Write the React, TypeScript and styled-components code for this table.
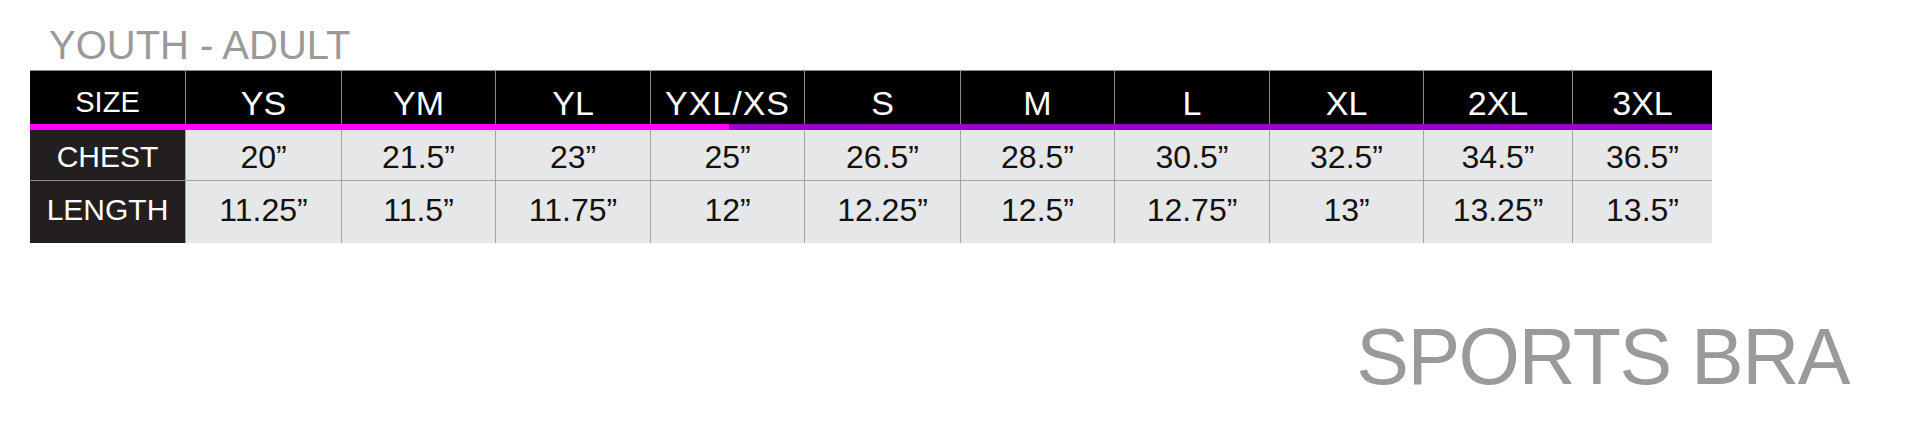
import React from "react";
import styled, { createGlobalStyle } from "styled-components";

const GlobalStyle = createGlobalStyle`
  html, body {
    margin: 0;
    padding: 0;
    background: #ffffff;
  }
  body {
    font-family: "Liberation Sans", Arial, Helvetica, sans-serif;
  }
`;

type Tone = "pink" | "purple" | "split";

interface SizeColumn {
  size: string;
  chest: string;
  length: string;
  width: number;
  tone: Tone;
}

const LABEL_WIDTH = 155;

const columns: SizeColumn[] = [
  { size: "YS", chest: "20”", length: "11.25”", width: 156, tone: "pink" },
  { size: "YM", chest: "21.5”", length: "11.5”", width: 154, tone: "pink" },
  { size: "YL", chest: "23”", length: "11.75”", width: 155, tone: "pink" },
  { size: "YXL/XS", chest: "25”", length: "12”", width: 154, tone: "split" },
  { size: "S", chest: "26.5”", length: "12.25”", width: 156, tone: "purple" },
  { size: "M", chest: "28.5”", length: "12.5”", width: 154, tone: "purple" },
  { size: "L", chest: "30.5”", length: "12.75”", width: 155, tone: "purple" },
  { size: "XL", chest: "32.5”", length: "13”", width: 154, tone: "purple" },
  { size: "2XL", chest: "34.5”", length: "13.25”", width: 149, tone: "purple" },
  { size: "3XL", chest: "36.5”", length: "13.5”", width: 140, tone: "purple" },
];

const PINK = "#ff00ff";
const PURPLE = "#9900c9";

const Page = styled.div`
  width: 1920px;
  height: 441px;
  box-sizing: border-box;
  padding: 25px 0 0 30px;
  display: flex;
  flex-direction: column;
  background: #ffffff;
  overflow: hidden;
`;

const Title = styled.h2`
  margin: 0 0 5px 19px;
  font-size: 40px;
  line-height: 40px;
  font-weight: 400;
  color: #9a9a9a;
  white-space: nowrap;
`;

const Table = styled.div<{ $template: string }>`
  display: grid;
  grid-template-columns: ${(p) => p.$template};
  width: max-content;
`;

const HeaderCell = styled.div`
  display: flex;
  flex-direction: column;
  background: #000000;
  border-top: 1px solid #8a8a8a;
`;

const HeaderLabel = styled.div<{ $first?: boolean; $wide?: boolean }>`
  height: 53px;
  box-sizing: border-box;
  padding-top: 10px;
  display: flex;
  align-items: center;
  justify-content: center;
  border-left: ${(p) => (p.$first ? "none" : "1px solid #8a8a8a")};
  color: #ffffff;
  font-size: ${(p) => (p.$first ? "29px" : "34px")};
  line-height: 1;
  letter-spacing: ${(p) => (p.$wide ? "1px" : "0")};
  white-space: nowrap;
`;

const AccentBar = styled.div<{ $tone: Tone }>`
  height: 6px;
  background: ${(p) =>
    p.$tone === "pink"
      ? PINK
      : p.$tone === "purple"
      ? PURPLE
      : `linear-gradient(to right, ${PINK} 0 79px, ${PURPLE} 79px 100%)`};
`;

const BodyCell = styled.div<{ $label?: boolean; $row: "chest" | "length" }>`
  box-sizing: border-box;
  height: ${(p) => (p.$row === "chest" ? "50px" : "63px")};
  display: flex;
  align-items: center;
  justify-content: center;
  padding: ${(p) => (p.$row === "chest" ? "4px 0 0" : "0 0 4px")};
  background: ${(p) => (p.$label ? "#231f20" : "#e6e7e8")};
  color: ${(p) => (p.$label ? "#ffffff" : "#111111")};
  border-left: ${(p) => (p.$label ? "none" : "1px solid #a3a3a3")};
  border-top: ${(p) =>
    p.$row === "length"
      ? p.$label
        ? "1px solid #8f8f8f"
        : "1px solid #a3a3a3"
      : "none"};
  font-size: ${(p) => (p.$label ? "30px" : "32px")};
  line-height: 1;
  white-space: nowrap;
`;

const Footer = styled.div`
  align-self: flex-end;
  margin: 74px 71px 0 0;
  font-size: 79px;
  line-height: 79px;
  letter-spacing: -1.5px;
  color: #999a9c;
  white-space: nowrap;
`;

export default function App() {
  const template = [LABEL_WIDTH, ...columns.map((c) => c.width)]
    .map((w) => `${w}px`)
    .join(" ");

  return (
    <>
      <GlobalStyle />
      <Page>
        <Title>YOUTH - ADULT</Title>
        <Table $template={template}>
          <HeaderCell>
            <HeaderLabel $first>SIZE</HeaderLabel>
            <AccentBar $tone="pink" />
          </HeaderCell>
          {columns.map((c) => (
            <HeaderCell key={`h-${c.size}`}>
              <HeaderLabel $wide={c.size.length > 4}>{c.size}</HeaderLabel>
              <AccentBar $tone={c.tone} />
            </HeaderCell>
          ))}

          <BodyCell $label $row="chest">
            CHEST
          </BodyCell>
          {columns.map((c) => (
            <BodyCell key={`c-${c.size}`} $row="chest">
              {c.chest}
            </BodyCell>
          ))}

          <BodyCell $label $row="length">
            LENGTH
          </BodyCell>
          {columns.map((c) => (
            <BodyCell key={`l-${c.size}`} $row="length">
              {c.length}
            </BodyCell>
          ))}
        </Table>
        <Footer>SPORTS BRA</Footer>
      </Page>
    </>
  );
}
